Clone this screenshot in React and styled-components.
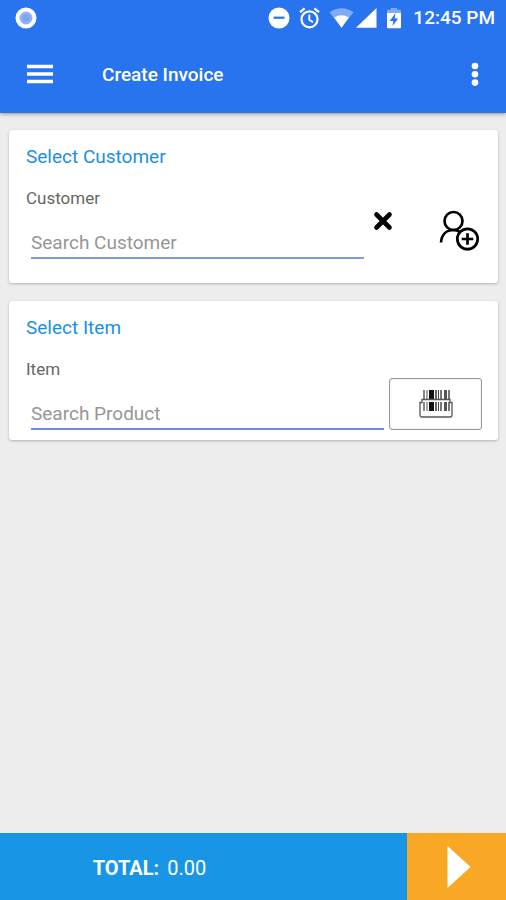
import React from "react";
import styled, { createGlobalStyle } from "styled-components";

const GlobalStyle = createGlobalStyle`
  *, *::before, *::after { box-sizing: border-box; }
  body {
    margin: 0;
    background: #ededed;
    font-family: Roboto, sans-serif;
  }
  button { font: inherit; cursor: pointer; }
`;

const Screen = styled.div`
  display: flex;
  flex-direction: column;
  min-height: 100vh;
`;

const Header = styled.header`
  background: #2873ee;
  color: #fff;
  box-shadow: 0 1px 4px rgba(0, 0, 0, 0.4);
`;

const StatusBar = styled.div`
  display: flex;
  align-items: center;
  height: 36px;
  padding: 0 11px 0 15px;
`;

const StatusIcons = styled.div`
  display: flex;
  align-items: center;
  gap: 9px;
  margin-left: auto;
`;

const Signals = styled.div`
  display: flex;
  align-items: center;
  gap: 2px;
`;

const Clock = styled.time`
  margin-left: 3px;
  font-size: 19px;
  font-weight: 500;
  line-height: 24px;
`;

const AppBar = styled.div`
  display: flex;
  align-items: center;
  height: 77px;
  padding: 0 16px 0 20px;
`;

const IconButton = styled.button`
  display: flex;
  align-items: center;
  justify-content: center;
  flex: none;
  width: ${(p) => p.$width}px;
  height: 40px;
  padding: 0;
  border: 0;
  background: none;
  color: inherit;
`;

const Title = styled.h1`
  flex: 1;
  margin: 0 0 0 42px;
  font-size: 19px;
  font-weight: 500;
  line-height: 24px;
`;

const Main = styled.main`
  flex: 1;
  display: flex;
  flex-direction: column;
  gap: 18px;
  padding: 17px 8px 17px 9px;
`;

const Card = styled.section`
  padding: 16px 16px ${(p) => p.$bottom}px 17px;
  border-radius: 3px;
  background: #fff;
  box-shadow: 0 1px 3px rgba(0, 0, 0, 0.25);
`;

const CardTitle = styled.h2`
  margin: 0 0 20px;
  color: #1a8fe3;
  font-size: 19px;
  font-weight: 400;
  line-height: 22px;
`;

const CardRow = styled.div`
  display: flex;
  align-items: ${(p) => p.$align};
`;

const Field = styled.div`
  display: flex;
  flex: 1;
  flex-direction: column;
  min-width: 0;
`;

const Label = styled.label`
  margin-bottom: 20px;
  color: #666;
  font-size: 17px;
  line-height: 20px;
`;

const SearchInput = styled.input`
  min-width: 0;
  height: 31px;
  margin-left: 5px;
  padding: 0;
  border: 0;
  border-bottom: 2px solid ${(p) => p.$line};
  border-radius: 0;
  outline: none;
  background: none;
  color: #333;
  font-family: inherit;
  font-size: 19px;
  &::placeholder { color: #969696; opacity: 1; }
`;

const CustomerActions = styled.div`
  display: flex;
  gap: 36px;
  padding-top: 13px;
  color: #000;
`;

const ActionButton = styled(IconButton)`
  height: ${(p) => p.$height}px;
`;

const ScanButton = styled.button`
  display: flex;
  align-items: center;
  justify-content: center;
  flex: none;
  width: 93px;
  height: 52px;
  margin-left: 5px;
  padding: 0;
  border: 1px solid #999;
  border-radius: 3px;
  background: #fff;
  box-shadow: inset 0 0 1px #999;
`;

const Footer = styled.footer`
  display: flex;
  height: 67px;
  color: #fff;
`;

const Total = styled.div`
  display: flex;
  flex: 1;
  align-items: center;
  justify-content: center;
  gap: 8px;
  padding: 2px 108px 0 0;
  background: #1896e5;
  font-size: 20px;
  line-height: 24px;
`;

const TotalLabel = styled.strong`
  font-weight: 700;
`;

const NextButton = styled.button`
  display: flex;
  align-items: center;
  justify-content: center;
  width: 99px;
  padding: 0 0 0 4px;
  border: 0;
  background: #f9a825;
`;

const Art = styled.svg`
  display: block;
  flex: none;
`;

const RecordIcon = () => (
  <Art width="22" height="22" viewBox="0 0 22 22" aria-hidden="true">
    <circle cx="11" cy="11" r="8.5" fill="#8fb2f3" stroke="#fff" strokeWidth="4" />
    <circle cx="11" cy="11" r="3.5" fill="#7ba5f2" />
  </Art>
);

const DoNotDisturbIcon = () => (
  <Art width="22" height="22" viewBox="0 0 22 22" aria-hidden="true">
    <circle cx="11" cy="11" r="10.5" fill="#fff" />
    <path d="M5.5 10.7h11" stroke="#2873ee" strokeWidth="2.2" />
  </Art>
);

const AlarmIcon = () => (
  <Art width="21" height="22" viewBox="0 0 21 22" fill="none" stroke="#fff" aria-hidden="true">
    <circle cx="10.5" cy="12.3" r="8" strokeWidth="2.2" />
    <path d="M10.3 7.5v5.2l3.7 2.5" strokeWidth="1.8" />
    <path d="M1 5.2l4.6-3.8M20 5.2l-4.6-3.8" strokeWidth="2.2" />
  </Art>
);

const WifiIcon = () => (
  <Art width="25" height="22" viewBox="0 0 25 22" aria-hidden="true">
    <path d="M12.5 20.8L.5 5.3Q12.500-3 24.500 5.300Z" fill="#80abf5" />
    <path d="M12.500 20.800L5.200 10.500Q12.500 5.800 19.800 10.500Z" fill="#fff" />
  </Art>
);

const CellIcon = () => (
  <Art width="22" height="22" viewBox="0 0 22 22" aria-hidden="true">
    <path d="M20.500 1v19.700H0Z" fill="#fff" />
  </Art>
);

const BatteryIcon = () => (
  <Art width="14" height="22" viewBox="0 0 14 22" aria-hidden="true">
    <path d="M0 6V3.700q0-1 1-1h2.800V1h6.400v1.700H13q1 0 1 1V6Z" fill="#80abf5" />
    <path d="M0 6h14v14.200q0 1-1 1H1q-1 0-1-1Z" fill="#fff" />
    <path d="M8.500 6L2.800 14h3.500l-.8 5 5.700-7.600H7.700Z" fill="#2873ee" />
  </Art>
);

const MenuIcon = () => (
  <Art width="28" height="22" viewBox="0 0 28 22" aria-hidden="true">
    <path d="M1 2.500h26M1 10h26M1 17.500h26" stroke="#fff" strokeWidth="3.500" />
  </Art>
);

const MoreIcon = () => (
  <Art width="8" height="26" viewBox="0 0 8 26" fill="#fff" aria-hidden="true">
    <circle cx="4" cy="4" r="3.300" />
    <circle cx="4" cy="12.300" r="3.300" />
    <circle cx="4" cy="20.600" r="3.300" />
  </Art>
);

const ClearIcon = () => (
  <Art width="20" height="20" viewBox="0 0 20 20" aria-hidden="true">
    <path d="M3.500 3.500l13 13M16.500 3.500l-13 13" stroke="#000" strokeWidth="4.600" strokeLinecap="round" />
  </Art>
);

const AddCustomerIcon = () => (
  <Art width="42" height="42" viewBox="0 0 42 42" fill="none" stroke="#000" strokeWidth="2.700" aria-hidden="true">
    <circle cx="14.500" cy="11" r="9" />
    <path d="M2 32.500C2.700 24.500 7.500 20 14.500 20q3.500 0 6.500 1.800" />
    <circle cx="28.500" cy="29" r="10.200" />
    <path d="M22.700 29h11.600M28.500 23.200v11.600" />
  </Art>
);

const BARS = [
  [4, 2, "#888"], [7, 2, "#aaa"], [10, 5, "#111"],
  [16, 2, "#666"], [19, 1, "#444"], [21, 2, "#777"],
  [25, 3, "#555"], [29, 2, "#777"],
];

const BarcodeIcon = () => (
  <Art width="34" height="30" viewBox="0 0 34 30" aria-hidden="true">
    {BARS.map(([x, width, fill]) => (
      <React.Fragment key={x}>
        <rect x={x} y="1" width={width} height="9" fill={fill} />
        <rect x={x} y="13" width={width} height="9" fill={fill} />
      </React.Fragment>
    ))}
    <path d="M3 10.500h28v3h2v12.500q0 2-2 2H3q-2 0-2-2V13.500h2Z" fill="none" stroke="#555" strokeWidth="1.300" />
  </Art>
);

const PlayIcon = () => (
  <Art width="24" height="42" viewBox="0 0 24 42" aria-hidden="true">
    <path d="M.5 0L23.500 21L.5 42Z" fill="#fff" />
  </Art>
);

export default function App() {
  return (
    <Screen>
      <GlobalStyle />
      <Header>
        <StatusBar>
          <RecordIcon />
          <StatusIcons>
            <DoNotDisturbIcon />
            <AlarmIcon />
            <Signals>
              <WifiIcon />
              <CellIcon />
            </Signals>
            <BatteryIcon />
            <Clock>12:45 PM</Clock>
          </StatusIcons>
        </StatusBar>
        <AppBar>
          <IconButton type="button" $width={40} aria-label="Open menu">
            <MenuIcon />
          </IconButton>
          <Title>Create Invoice</Title>
          <IconButton type="button" $width={30} aria-label="More options">
            <MoreIcon />
          </IconButton>
        </AppBar>
      </Header>

      <Main>
        <Card $bottom={22}>
          <CardTitle>Select Customer</CardTitle>
          <CardRow $align="flex-start">
            <Field>
              <Label htmlFor="customer">Customer</Label>
              <SearchInput id="customer" type="text" placeholder="Search Customer" $line="#7f9be0" />
            </Field>
            <CustomerActions>
              <ActionButton type="button" $width={37} $height={40} aria-label="Clear customer">
                <ClearIcon />
              </ActionButton>
              <ActionButton type="button" $width={45} $height={60} aria-label="Add customer">
                <AddCustomerIcon />
              </ActionButton>
            </CustomerActions>
          </CardRow>
        </Card>

        <Card $bottom={10}>
          <CardTitle>Select Item</CardTitle>
          <CardRow $align="flex-end">
            <Field>
              <Label htmlFor="item">Item</Label>
              <SearchInput id="item" type="text" placeholder="Search Product" $line="#6d8ae6" />
            </Field>
            <ScanButton type="button" aria-label="Scan barcode">
              <BarcodeIcon />
            </ScanButton>
          </CardRow>
        </Card>
      </Main>

      <Footer>
        <Total>
          <TotalLabel>TOTAL:</TotalLabel>
          <span>0.00</span>
        </Total>
        <NextButton type="button" aria-label="Continue">
          <PlayIcon />
        </NextButton>
      </Footer>
    </Screen>
  );
}
